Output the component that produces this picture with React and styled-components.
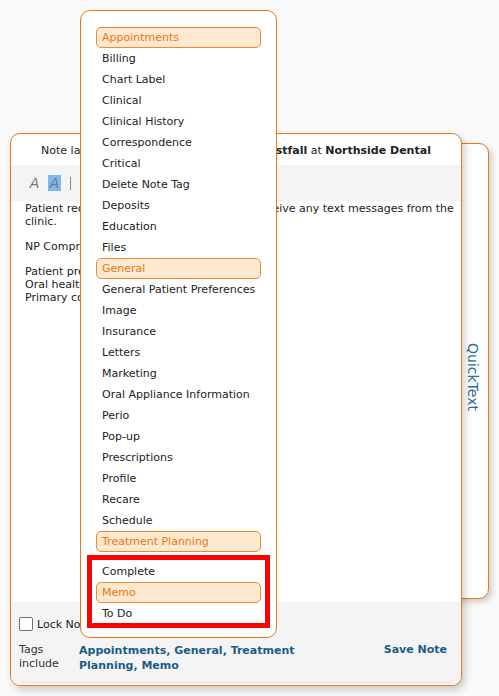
import React from "react";
import styled, { createGlobalStyle } from "styled-components";

const GlobalStyle = createGlobalStyle`
  html, body {
    margin: 0;
    padding: 0;
    background: #fafafa;
    font-family: "DejaVu Sans", Verdana, sans-serif;
    font-size: 11px;
    color: #222;
  }
`;

const ORANGE = "#ec7a14";
const LINK = "#1d5c87";

const Stage = styled.div`
  position: relative;
  width: 499px;
  height: 696px;
  padding: 133px 0 0 10px;
  box-sizing: border-box;
  overflow: hidden;
`;

const CardWrap = styled.div`
  position: relative;
  width: 452px;
  height: 553px;
`;

const SideTab = styled.div`
  position: absolute;
  top: 10px;
  right: -27px;
  width: 80px;
  height: 456px;
  background: #fff;
  border: 1px solid ${ORANGE};
  border-radius: 10px;
  box-sizing: border-box;
  box-shadow: 3px 3px 6px rgba(0, 0, 0, 0.18);
  display: flex;
  justify-content: flex-end;
  align-items: center;
`;

const SideLabel = styled.div`
  writing-mode: vertical-rl;
  font-size: 14px;
  line-height: 16px;
  color: #2c6d98;
  margin: 12px 7px 0 0;
`;

const Card = styled.div`
  position: relative;
  z-index: 1;
  height: 100%;
  display: flex;
  flex-direction: column;
  background: #fff;
  border: 1px solid ${ORANGE};
  border-radius: 10px;
  box-sizing: border-box;
  overflow: hidden;
  box-shadow: 3px 4px 8px rgba(0, 0, 0, 0.2);
`;

const Header = styled.div`
  height: 31px;
  display: flex;
  align-items: center;
  justify-content: center;
  padding-top: 2px;
  white-space: nowrap;
  box-sizing: border-box;
  b {
    font-weight: bold;
  }
`;

const Toolbar = styled.div`
  height: 36px;
  background: #f4f4f4;
  display: flex;
  align-items: center;
  gap: 7px;
  padding-left: 17px;
`;

const FormatBtn = styled.span`
  width: 13px;
  height: 16px;
  display: flex;
  align-items: center;
  justify-content: center;
  font-size: 14px;
  font-style: italic;
  color: #777;
  background: ${(p) => (p.$active ? "#7cb9f2" : "transparent")};
`;

const Divider = styled.span`
  width: 1px;
  height: 13px;
  background: #888;
  margin-left: 2px;
`;

const Body = styled.div`
  flex: 1;
  padding: 1px 2px 0 14px;
  line-height: 13px;
  p {
    margin: 0 0 12px;
  }
`;

const Footer = styled.div`
  height: 83px;
  background: #f4f4f4;
  padding: 14px 14px 0 8px;
  box-sizing: border-box;
  position: relative;
  &::after {
    content: "";
    position: absolute;
    left: 11px;
    right: 10px;
    bottom: 2px;
    height: 1px;
    background: #e2e2e2;
  }
`;

const LockRow = styled.label`
  display: flex;
  align-items: center;
  gap: 4px;
  height: 16px;
`;

const Box = styled.span`
  width: 12px;
  height: 12px;
  border: 1px solid #6f6f6f;
  border-radius: 2px;
  background: #fff;
`;

const TagsRow = styled.div`
  margin-top: 10px;
  display: grid;
  grid-template-columns: 60px 1fr auto;
  line-height: 14px;
`;

const TagsLabel = styled.div`
  color: #333;
  padding-top: 1px;
`;

const Links = styled.div`
  max-width: 225px;
  color: ${LINK};
  font-weight: bold;
  padding-top: 1px;
  line-height: 15px;
`;

const SaveLink = styled.div`
  color: ${LINK};
  font-weight: bold;
  padding-top: 1px;
  padding-left: 20px;
`;

const Dropdown = styled.div`
  position: absolute;
  z-index: 5;
  left: 80px;
  top: 10px;
  width: 197px;
  height: 628px;
  background: #fff;
  border: 1px solid ${ORANGE};
  border-radius: 10px;
  box-sizing: border-box;
  padding: 16px 15px 0 15px;
`;

const Item = styled.div`
  height: 21px;
  display: flex;
  align-items: center;
  padding-left: 5px;
  box-sizing: border-box;
  border-radius: 5px;
  border: 1px solid ${(p) => (p.$tagged ? "#ef8a33" : "transparent")};
  background: ${(p) => (p.$tagged ? "#fde9d0" : "transparent")};
  color: ${(p) => (p.$tagged ? "#ef7710" : "#222")};
  white-space: nowrap;
`;

const Marked = styled.div`
  margin: 3px -9px 0 -9px;
  border: 5px solid #ff0000;
  padding: 1px 4px 0;
  height: 62px;
  box-sizing: content-box;
`;

const tags = [
  "Appointments",
  "Billing",
  "Chart Label",
  "Clinical",
  "Clinical History",
  "Correspondence",
  "Critical",
  "Delete Note Tag",
  "Deposits",
  "Education",
  "Files",
  "General",
  "General Patient Preferences",
  "Image",
  "Insurance",
  "Letters",
  "Marketing",
  "Oral Appliance Information",
  "Perio",
  "Pop-up",
  "Prescriptions",
  "Profile",
  "Recare",
  "Schedule",
  "Treatment Planning",
];

const states = ["Complete", "Memo", "To Do"];
const selected = ["Appointments", "General", "Treatment Planning", "Memo"];

export default function App() {
  return (
    <Stage>
      <GlobalStyle />
      <CardWrap>
        <SideTab>
          <SideLabel>QuickText</SideLabel>
        </SideTab>
        <Card>
          <Header>
            Note last edited today by&nbsp;<b>Dr. Hannah Westfall</b>&nbsp;at&nbsp;<b>Northside Dental</b>
          </Header>
          <Toolbar>
            <FormatBtn>A</FormatBtn>
            <FormatBtn $active>A</FormatBtn>
            <Divider />
          </Toolbar>
          <Body>
            <p>Patient requested that they do not like to receive any text messages from the clinic.</p>
            <p>NP Comprehensive exam completed today.</p>
            <div>Patient prefers morning appointments.</div>
            <div>Oral health reviewed with patient.</div>
            <div>Primary concern: sensitivity upper left.</div>
          </Body>
          <Footer>
            <LockRow>
              <Box />
              Lock Note
            </LockRow>
            <TagsRow>
              <TagsLabel>
                Tags
                <br />
                include
              </TagsLabel>
              <Links>Appointments, General, Treatment Planning, Memo</Links>
              <SaveLink>Save Note</SaveLink>
            </TagsRow>
          </Footer>
        </Card>
      </CardWrap>
      <Dropdown>
        {tags.map((t) => (
          <Item key={t} $tagged={selected.includes(t)}>
            {t}
          </Item>
        ))}
        <Marked>
          {states.map((t) => (
            <Item key={t} $tagged={selected.includes(t)}>
              {t}
            </Item>
          ))}
        </Marked>
      </Dropdown>
    </Stage>
  );
}
